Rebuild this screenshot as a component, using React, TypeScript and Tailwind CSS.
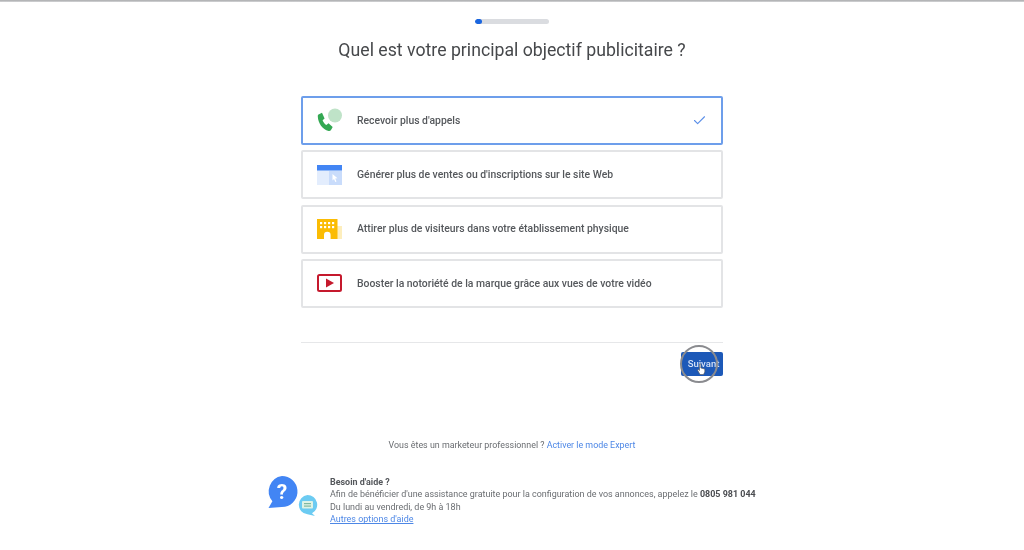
import { Check } from 'lucide-react';

const goals = [
  { label: "Recevoir plus d'appels", icon: <PhoneIcon />, selected: true },
  { label: "Générer plus de ventes ou d'inscriptions sur le site Web", icon: <WebIcon /> },
  { label: 'Attirer plus de visiteurs dans votre établissement physique', icon: <StoreIcon /> },
  { label: 'Booster la notoriété de la marque grâce aux vues de votre vidéo', icon: <VideoIcon /> },
];

function PhoneIcon() {
  return (
    <svg width="26" height="26" viewBox="0 0 26 26">
      <circle cx="18" cy="7.500" r="7" fill="#bfe3c8" />
      <path
        d="M1.500 6.500 5 4.800l2.600 5.600-2 1.800c.8 2.200 2 3.700 3.800 4.800l2.100-1.700 4.200 3.600-1.700 3c-.5.9-1.400 1.200-2.400 1C5.500 21.700 1 15 .8 8.500c0-.9.100-1.600.7-2z"
        fill="#34a853"
      />
    </svg>
  );
}

function WebIcon() {
  return (
    <svg width="25" height="20" viewBox="0 0 25 20">
      <rect width="25" height="20" fill="#e3edfd" />
      <rect x="12" y="6" width="13" height="14" fill="#c9dcfb" />
      <rect width="25" height="5.500" fill="#4285f4" />
      <path d="M15.500 9l5 4.200-2.300.3 1.300 3-1.200.5-1.300-3-1.500 1.500z" fill="#fff" />
    </svg>
  );
}

function StoreIcon() {
  return (
    <svg width="25" height="20" viewBox="0 0 25 20">
      <rect x="20" y="7" width="5" height="13" fill="#fdeebd" />
      <rect width="20.500" height="20" fill="#fbbc04" />
      {[3, 7, 11, 15].map((x) =>
        [3, 7].map((y) => <rect key={`${x}-${y}`} x={x} y={y} width="2.200" height="2.200" fill="#fff" />),
      )}
      <path d="M7 20v-4a3.300 3.300 0 0 1 6.600 0v4z" fill="#fff" />
    </svg>
  );
}

function VideoIcon() {
  return (
    <svg width="25" height="18" viewBox="0 0 25 18">
      <rect x="1" y="1" width="23" height="16" rx="1.500" fill="#fff" stroke="#c5192d" strokeWidth="2" />
      <path d="M9 4.500l8 4.500-8 4.500z" fill="#c5192d" />
    </svg>
  );
}

function HelpIcon() {
  return (
    <svg width="54" height="42" viewBox="0 0 54 42">
      <path d="M16 1a15.500 15.500 0 0 1 3 30.700L2.500 33l3.900-6.700A15.500 15.500 0 0 1 16 1z" fill="#4285f4" />
      <text x="16" y="24" textAnchor="middle" fontFamily="Roboto, sans-serif" fontWeight="700" fontSize="21" fill="#fff">
        ?
      </text>
      <path d="M41.500 20a9.700 9.700 0 0 1 4.500 18.300l3 2.700-7.500-1.700a9.700 9.700 0 0 1 0-19.300z" fill="#6ccbf2" />
      <rect x="36" y="26" width="11" height="7.500" rx="1" fill="#dff3e6" />
      <rect x="38" y="28" width="7" height="1.200" fill="#7fb8a0" />
      <rect x="38" y="30.500" width="7" height="1.200" fill="#7fb8a0" />
    </svg>
  );
}

function GoalCard({ label, icon, selected }: { label: string; icon: React.ReactNode; selected?: boolean }) {
  return (
    <div
      className={
        selected
          ? 'flex h-[49px] items-center rounded-[2px] border-2 border-[#6d9eeb] bg-white'
          : 'flex h-[49px] items-center rounded-[2px] border-2 border-[#e3e4e6] bg-white'
      }
    >
      <div className="flex w-[54px] justify-start pl-[14px]">{icon}</div>
      <span className="flex-1 text-[10.400px] font-medium text-[#55585c]">{label}</span>
      {selected && <Check className="mr-[14px] text-[#5b8fe8]" size={15} strokeWidth={1.75} />}
    </div>
  );
}

export default function App() {
  return (
    <div className="h-[550px] w-[1024px] overflow-hidden bg-white font-['Roboto',sans-serif] blur-[0.5px]">
      <div className="h-[2px] bg-gradient-to-b from-[#a9aaac] to-[#d5d6d8]" />
      <div className="flex flex-col items-center pt-[17px]">
        <div className="h-[5px] w-[74px] overflow-hidden rounded-full bg-[#dadce0]">
          <div className="h-full w-[7px] rounded-full bg-[#1a66e0]" />
        </div>
        <h1 className="mt-[14px] text-[17.700px] leading-[24px] font-normal text-[#46484b]">
          Quel est votre principal objectif publicitaire ?
        </h1>
        <div className="mt-[34px] flex w-[422px] flex-col gap-[5.300px]">
          {goals.map((goal) => (
            <GoalCard key={goal.label} {...goal} />
          ))}
        </div>
        <div className="mt-[34px] h-px w-[422px] bg-[#e6e7e9]" />
        <div className="mt-[9px] flex w-[422px] justify-end">
          <div className="relative flex h-[24px] w-[42px] items-center justify-center rounded-[2px] bg-[#1d59b8] text-[9.500px] font-medium text-[#d5e2f7]">
            <span className="ml-[3px]">Suivant</span>
            <div className="absolute top-[-7px] left-[-1px] h-[38px] w-[38px] rounded-full border-2 border-[#8a8b8f]" />
            <svg className="absolute top-[11px] left-[16px]" width="9" height="12" viewBox="0 0 9 12">
              <path d="M2.500 1h1.300v4l4 1v3L6.500 11.500H3L.5 7l1-.5 1 1z" fill="#fff" stroke="#555" strokeWidth="0.600" />
            </svg>
          </div>
        </div>
        <p className="mt-[62px] text-[8.900px] leading-[14px] text-[#6a6d71]">
          Vous êtes un marketeur professionnel ? <span className="text-[#4d87e6]">Activer le mode Expert</span>
        </p>
        <div className="mt-[24px] ml-[2px] flex w-[490px] items-start">
          <div className="-mt-[1px] -ml-[2px] w-[64px] shrink-0">
            <HelpIcon />
          </div>
          <div className="text-[8.950px] leading-[12.500px] text-[#6a6d71]">
            <p className="font-bold text-[#55585c]">Besoin d'aide ?</p>
            <p>
              Afin de bénéficier d'une assistance gratuite pour la configuration de vos annonces, appelez le{' '}
              <span className="font-bold text-[#4a4c50]">0805 981 044</span>
            </p>
            <p>Du lundi au vendredi, de 9h à 18h</p>
            <p className="text-[#4d87e6] underline">Autres options d'aide</p>
          </div>
        </div>
      </div>
    </div>
  );
}
